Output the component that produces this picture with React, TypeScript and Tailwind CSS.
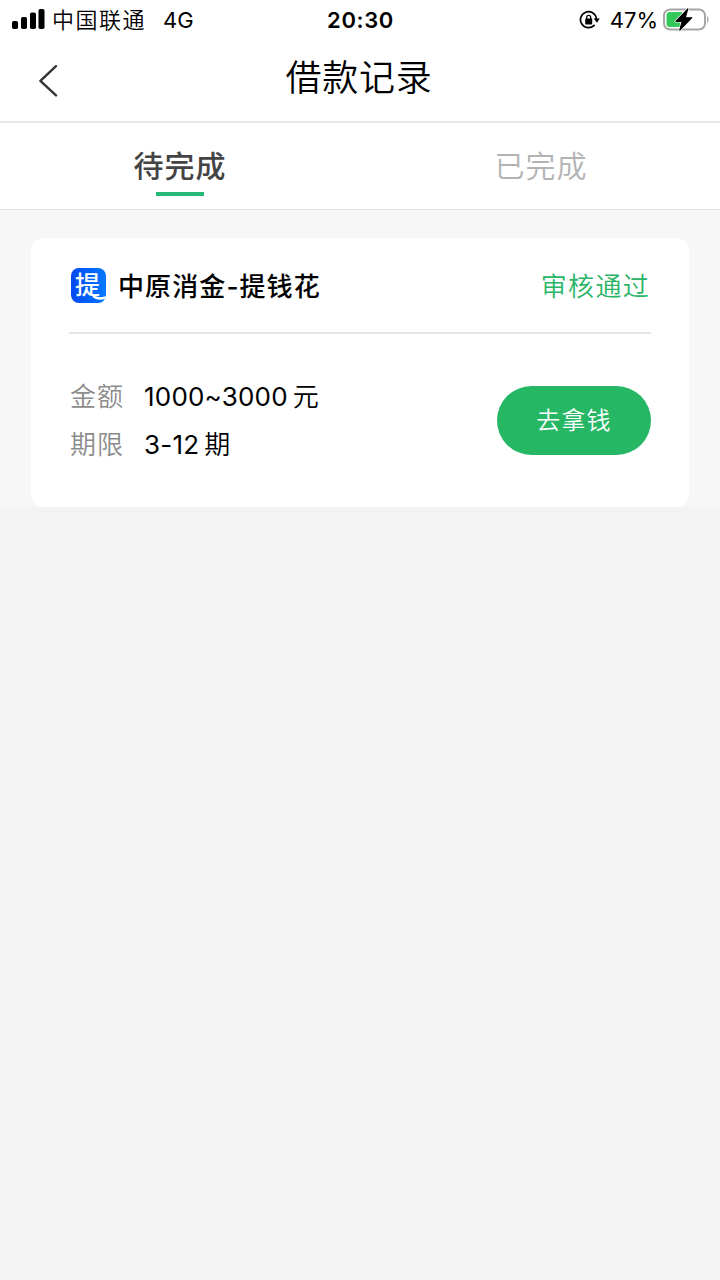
const font = "font-[Inter,'Noto_Sans_CJK_SC',sans-serif]";

function Signal() {
  return (
    <svg className="block h-6 w-[33px] shrink-0" viewBox="0 0 33 24" fill="#000">
      <rect x="0" y="13" width="6" height="8" rx="1.8" />
      <rect x="9" y="9" width="6" height="12" rx="1.8" />
      <rect x="18" y="4.5" width="6" height="16.5" rx="1.8" />
      <rect x="26.5" y="1" width="6" height="20" rx="1.8" />
    </svg>
  );
}

function RotationLock() {
  return (
    <svg className="block h-5 w-[21px] shrink-0" viewBox="0 0 21 20" fill="none">
      <path d="M15.2 15.3A8 8 0 1 1 17.4 8.6" stroke="#000" strokeWidth="1.7" strokeLinecap="round" />
      <path d="M14.6 8.4h6.2l-2.8 4.4z" fill="#000" />
      <rect x="6.2" y="8.6" width="7" height="5.8" rx="0.9" fill="#000" />
      <path d="M7.7 9V7.4a2 2 0 0 1 4 0V9" stroke="#000" strokeWidth="1.3" />
    </svg>
  );
}

function Battery() {
  return (
    <svg className="block h-6 w-[46px] shrink-0" viewBox="0 0 46 24" fill="none">
      <rect x="1" y="1.5" width="41" height="20" rx="6" stroke="#a6a6a6" strokeWidth="2" />
      <path d="M44 8c2 .6 2 6.4 0 7z" fill="#a6a6a6" />
      <path d="M7 4h12V19H7A3.5 3.5 0 0 1 3.5 15.5V7.5A3.5 3.5 0 0 1 7 4z" fill="#34c759" />
      <path
        d="M24.8.9 13 13.3h6.2L16.8 22.2 28.6 9.8h-6.4z"
        fill="#000"
        stroke="#fff"
        strokeWidth="2.6"
        strokeLinejoin="round"
      />
      <path
        d="M24.8.9 13 13.3h6.2L16.8 22.2 28.6 9.8h-6.4z"
        fill="#000"
        stroke="#000"
        strokeWidth="1.2"
        strokeLinejoin="round"
      />
    </svg>
  );
}

function StatusBar() {
  return (
    <div className="grid h-10 grid-cols-3 items-center pr-[11px] pl-3 text-black">
      <div className="flex items-center">
        <Signal />
        <span className="ml-[7px] text-[22px] leading-10 font-[350] tracking-[1.5px]">中国联通</span>
        <span className="ml-[17px] text-[22px] leading-10">4G</span>
      </div>
      <div className="text-center text-[22px] leading-10 font-semibold tracking-[0.6px]">20:30</div>
      <div className="flex items-center justify-end">
        <RotationLock />
        <span className="mr-[5px] ml-[10px] text-[22px] leading-10">47%</span>
        <Battery />
      </div>
    </div>
  );
}

function Header() {
  return (
    <header className="grid h-[83px] grid-cols-[80px_1fr_80px] items-center border-b-2 border-[#e6e6e6]">
      <svg className="ml-[38px] block h-8 w-5" viewBox="0 0 20 32" fill="none">
        <path d="M18 1.2 2.4 15.8 18 30.4" stroke="#333" strokeWidth="2.4" strokeLinecap="round" strokeLinejoin="round" />
      </svg>
      <h1 className="-mt-1.5 -ml-0.5 text-center text-[36px] leading-[50px] font-[350] tracking-[0.8px] text-black">
        借款记录
      </h1>
    </header>
  );
}

function Tabs() {
  return (
    <nav className="grid h-[87px] grid-cols-2 border-b border-[#e2e2e2] bg-white">
      <div className="flex flex-col items-center">
        <span className="mt-[21px] text-[30px] leading-[44px] font-medium tracking-[1px] text-[#444]">待完成</span>
        <span className="mt-1 h-1 w-12 bg-[#26b878]" />
      </div>
      <div className="flex flex-col items-center">
        <span className="mt-[21px] ml-0.5 text-[30px] leading-[44px] font-[350] tracking-[1px] text-[#b3b3b3]">
          已完成
        </span>
      </div>
    </nav>
  );
}

function Logo() {
  return (
    <span className="relative -mt-0.5 flex h-[35px] w-[35px] items-center justify-center overflow-hidden rounded-[8px] bg-linear-to-r from-[#0648f0] to-[#0878ff]">
      <span className="-mt-0.5 mr-0.5 text-[25px] leading-9 font-medium text-white">提</span>
      <svg className="absolute right-0 bottom-0 h-3 w-5" viewBox="0 0 20 12" fill="none">
        <path d="M7 5Q12 9.2 20 6.2" stroke="#fff" strokeWidth="2.4" />
      </svg>
    </span>
  );
}

function Detail({ label, value, unit }: { label: string; value: string; unit: string }) {
  return (
    <div className="flex h-12 items-center text-[26px] tracking-[1px]">
      <span className="w-[74px] font-[350] text-[#8c8c8c]">{label}</span>
      <span className="tracking-[0.2px] text-black">{value}</span>
      <span className="ml-[5px] font-[350] text-black">{unit}</span>
    </div>
  );
}

function LoanCard() {
  return (
    <article className="h-[268.5px] rounded-[14px] bg-white px-[38px]">
      <div className="flex h-24 items-center justify-between border-b-2 border-[#e6e6e6] pt-[3px]">
        <div className="flex items-center gap-3 pl-0.5">
          <Logo />
          <h2 className="text-[26px] font-medium tracking-[1.1px] text-black">中原消金-提钱花</h2>
        </div>
        <span className="mr-px text-[26px] font-[350] tracking-[1.3px] text-[#29b466]">审核通过</span>
      </div>
      <div className="flex justify-between pt-[38px]">
        <div className="pl-px">
          <Detail label="金额" value="1000~3000" unit="元" />
          <Detail label="期限" value="3-12" unit="期" />
        </div>
        <button className="mt-[14px] h-[69px] w-[154px] rounded-full bg-[#26b765] text-[24px] font-[350] tracking-[1.2px] text-white">
          去拿钱
        </button>
      </div>
    </article>
  );
}

export default function App() {
  return (
    <div className={`min-h-screen w-full bg-[#f3f3f3] ${font}`}>
      <div className="bg-white">
        <StatusBar />
        <Header />
      </div>
      <Tabs />
      <main className="bg-[#f7f7f7] px-[31px] pt-7">
        <LoanCard />
      </main>
    </div>
  );
}
